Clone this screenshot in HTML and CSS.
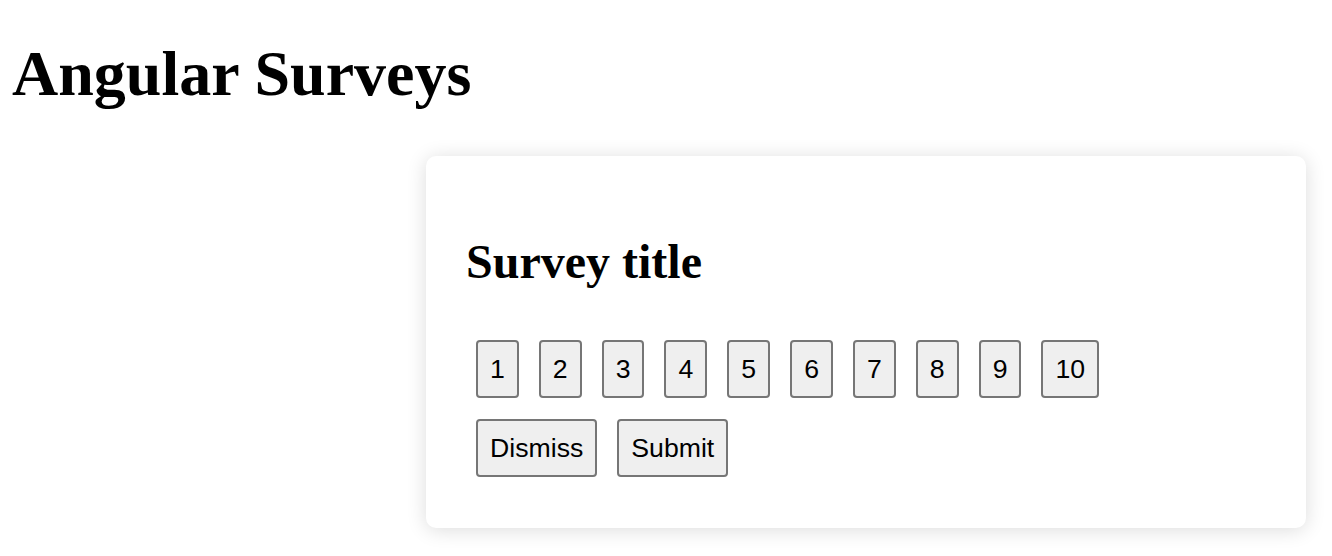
FILE: index.html
```html
<!DOCTYPE html>
<html lang="en">
<head>
<meta charset="utf-8">
<title>Angular Surveys</title>
<link rel="stylesheet" href="styles.css">
</head>
<body>
  <h1 class="page-title">Angular Surveys</h1>
  <div class="survey-host">
    <div class="survey-card">
      <h2 class="survey-title">Survey title</h2>
      <div class="rating-row">
        <button class="btn">1</button>
        <button class="btn">2</button>
        <button class="btn">3</button>
        <button class="btn">4</button>
        <button class="btn">5</button>
        <button class="btn">6</button>
        <button class="btn">7</button>
        <button class="btn">8</button>
        <button class="btn">9</button>
        <button class="btn">10</button>
      </div>
      <div class="action-row">
        <button class="btn">Dismiss</button>
        <button class="btn">Submit</button>
      </div>
    </div>
  </div>
</body>
</html>
```

FILE: styles.css
```css
html, body {
  margin: 0;
  padding: 0;
  background: #ffffff;
}

body {
  font-family: "Liberation Serif", "Times New Roman", serif;
  color: #000000;
  padding-bottom: 29px;
}

.page-title {
  font-size: 64px;
  font-weight: bold;
  line-height: 73.5px;
  margin: 37px 0 0 12px;
}

.survey-host {
  display: flex;
  justify-content: flex-end;
  padding-right: 26px;
  margin-top: 45px;
}

.survey-card {
  box-sizing: border-box;
  width: 880px;
  background: #ffffff;
  border-radius: 10px;
  box-shadow: 0 2px 20px rgba(0, 0, 0, 0.14);
  padding: 40px 40px 51px 40px;
}

.survey-title {
  font-size: 48px;
  font-weight: bold;
  line-height: 55px;
  margin: 38px 0 51px 0;
}

.rating-row,
.action-row {
  display: flex;
  gap: 20px;
  padding-left: 10px;
}

.action-row {
  margin-top: 21px;
}

.btn {
  font-family: "Liberation Sans", Arial, sans-serif;
  font-size: 26.67px;
  line-height: 30px;
  color: #000000;
  background: #efefef;
  border: 2px solid #767676;
  border-radius: 4px;
  padding: 12px 12px;
  margin: 0;
}
```
